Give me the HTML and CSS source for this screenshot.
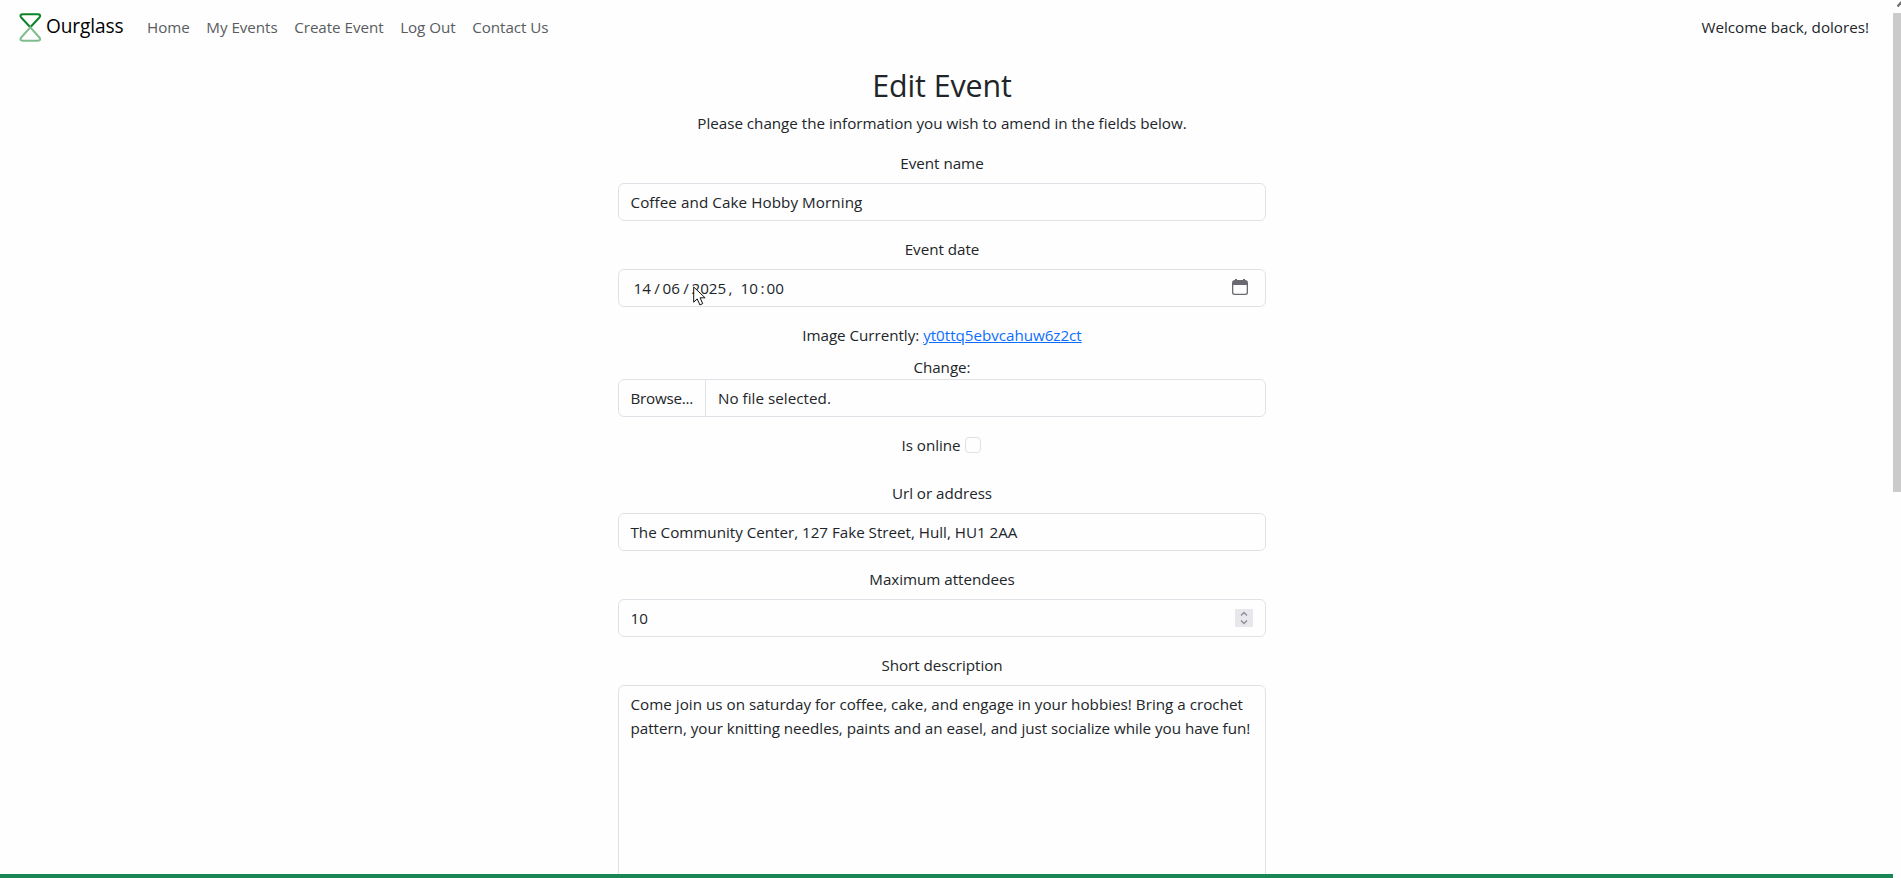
FILE: index.html
```
<!DOCTYPE html>
<html lang="en">
<head>
<meta charset="utf-8">
<title>Ourglass - Edit Event</title>
<link rel="stylesheet" href="styles.css">
</head>
<body>
<div class="page">
  <header class="navbar">
    <a class="brand">
      <svg class="logo" width="24" height="30" viewBox="0 0 24 30" fill="none" stroke-width="2">
        <path d="M12.300 15.300 3.200 5.500C1.700 3.700 2.300 2.300 4.900 2.300h14.800c2.600 0 3.200 1.400 1.700 3.200Z" stroke="#0b8428"/>
        <path d="M12.300 15.300 3.200 25.500C1.700 27.300 2.300 28.700 4.900 28.700h14.800c2.600 0 3.200-1.400 1.700-3.200Z" stroke="#7fbd8e"/>
      </svg>
      <span class="brand-name">Ourglass</span>
    </a>
    <nav class="links"><a>Home</a><a>My Events</a><a>Create Event</a><a>Log Out</a><a>Contact Us</a></nav>
    <span class="welcome">Welcome back, dolores!</span>
  </header>
  <main class="form">
    <h1 class="title">Edit Event</h1>
    <p class="intro">Please change the information you wish to amend in the fields below.</p>
    <div class="group">
      <label class="label">Event name</label>
      <div class="control loose">Coffee and Cake Hobby Morning</div>
    </div>
    <div class="group">
      <label class="label">Event date</label>
      <div class="control date">
        <span class="d2">14</span><span class="slash">/</span><span class="d2">06</span><span class="slash">/</span><span class="d4">2025</span><span class="comma">,</span><span class="d2">10</span><span class="colon">:</span><span class="d2">00</span>
        <svg class="calendar" width="16" height="16" viewBox="0 0 16 16">
          <path fill="#6b6a72" fill-rule="evenodd" d="M3 0h2v1h6V0h2v1a3 3 0 0 1 3 3v9.500a2.500 2.500 0 0 1-2.500 2.500h-11A2.500 2.500 0 0 1 0 13.500V4a3 3 0 0 1 3-3ZM1.300 6v7.200a1.500 1.500 0 0 0 1.500 1.500h10.400a1.500 1.500 0 0 0 1.500-1.500V6Z"/>
        </svg>
        <svg class="pointer" width="14" height="21" viewBox="0 0 14 21">
          <path d="M.7 1v15.200l3.500-3.300 2.700 6 2.800-1.300-2.600-5.800h5Z" fill="#fff" stroke="#111" stroke-width="1"/>
        </svg>
      </div>
    </div>
    <div class="group">
      <div class="label">Image Currently: <a class="link">yt0ttq5ebvcahuw6z2ct</a></div>
      <div class="change">Change:</div>
      <div class="control file"><span class="browse">Browse...</span><span class="filename">No file selected.</span></div>
    </div>
    <div class="group check"><label>Is online</label><span class="box"></span></div>
    <div class="group">
      <label class="label">Url or address</label>
      <div class="control address">The Community Center, 127 Fake Street, Hull, HU1 2AA</div>
    </div>
    <div class="group">
      <label class="label">Maximum attendees</label>
      <div class="control number"><span>10</span>
        <svg class="spinner" width="18" height="18" viewBox="0 0 18 18" fill="none">
          <path d="M0 0h18v18H0Z" fill="#e7e7ec"/>
          <path d="m6 6.500 3-3 3 3M6 11.500l3 3 3-3" stroke="#908f9d" stroke-width="1.500"/>
        </svg>
      </div>
    </div>
    <div class="group">
      <label class="label">Short description</label>
      <div class="control area"><span class="line-one">Come join us on saturday for coffee, cake, and engage in your hobbies! Bring a crochet</span><br>pattern, your knitting needles, paints and an easel, and just socialize while you have fun!</div>
    </div>
  </main>
  <footer class="footer"></footer>
</div>
<aside class="scrollbar">
  <svg class="arrow" width="8" height="13" viewBox="0 0 8 13" fill="none"><path d="m4.500 6.500 4-4.500" stroke="#707070" stroke-width="2.200"/></svg>
  <div class="thumb"></div>
</aside>
</body>
</html>
```

FILE: styles.css
```
* { box-sizing: border-box; }

body {
  margin: 0;
  height: 878px;
  overflow: hidden;
  display: flex;
  background: #fefefe;
  color: #212529;
  font: 15.2px/24px "Open Sans", "Noto Sans", sans-serif;
  letter-spacing: -0.03px;
}

.page {
  width: 1893px;
  height: 878px;
  display: flex;
  flex-direction: column;
}

.navbar {
  flex: none;
  height: 55px;
  padding: 0 24px 1px 18px;
  display: flex;
  align-items: center;
}

.brand {
  display: flex;
  align-items: center;
  gap: 3px;
  width: 129px;
  color: #000;
}

.logo { flex: none; }
.brand-name { font-size: 19.1px; line-height: 30px; letter-spacing: -0.1px; padding: 0 0 2px 1px; }

.links {
  display: flex;
  gap: 16.600px;
  color: #595c5f;
  letter-spacing: -0.05px;
}

.links, .welcome { padding-bottom: 1px; }
.welcome { margin-left: auto; letter-spacing: 0; }

.form {
  flex: 1;
  min-height: 0;
  width: 648px;
  margin-left: 618px;
  padding-top: 9px;
  overflow: hidden;
  text-align: center;
}

.title {
  margin: 0 0 3px;
  font-size: 30.400px;
  font-weight: 400;
  line-height: 44px;
  letter-spacing: -0.1px;
}

.intro { margin: 0 0 16px; letter-spacing: -0.015px; }
.group { margin-bottom: 16px; }
.label { display: block; margin-bottom: 8px; }

.control {
  display: flex;
  align-items: center;
  height: 38px;
  padding: 0 12px 0 11.500px;
  border: 1px solid #dee2e6;
  border-radius: 6px;
  text-align: left;
  white-space: nowrap;
}

.loose { letter-spacing: 0.08px; }
.address { letter-spacing: -0.015px; }
.line-one { letter-spacing: 0.015px; }

.date { position: relative; padding: 0 17px 0 14.500px; }
.d2 { width: 18px; }
.d4 { width: 36px; }
.slash { width: 11px; text-align: center; }
.comma { width: 13px; padding-left: 1px; }
.colon { width: 8px; text-align: center; }
.calendar { margin: -2px 0 0 auto; }
.pointer { position: absolute; left: 74px; top: 16px; }

.link { color: #0d6efd; text-decoration: underline; }
.change { height: 24px; }
.file { padding-left: 0; }

.browse {
  width: 87px;
  line-height: 36px;
  padding-left: 11.500px;
  border-right: 1px solid #dee2e6;
  letter-spacing: -0.25px;
}

.filename { padding-left: 12px; letter-spacing: 0.03px; }

.check {
  display: flex;
  justify-content: center;
  align-items: center;
  gap: 4px;
  height: 32px;
  padding: 0 2px 8px 0;
}

.box {
  width: 16px;
  height: 16px;
  border: 1px solid #dee2e6;
  border-radius: 4px;
}

.number { justify-content: space-between; }

.area {
  display: block;
  height: 240px;
  padding-top: 6px;
}

.footer { flex: none; height: 4px; background: #198754; }

.scrollbar { width: 8px; }
.arrow { display: block; }
.thumb { height: 479px; background: #cbcbcb; }
```
